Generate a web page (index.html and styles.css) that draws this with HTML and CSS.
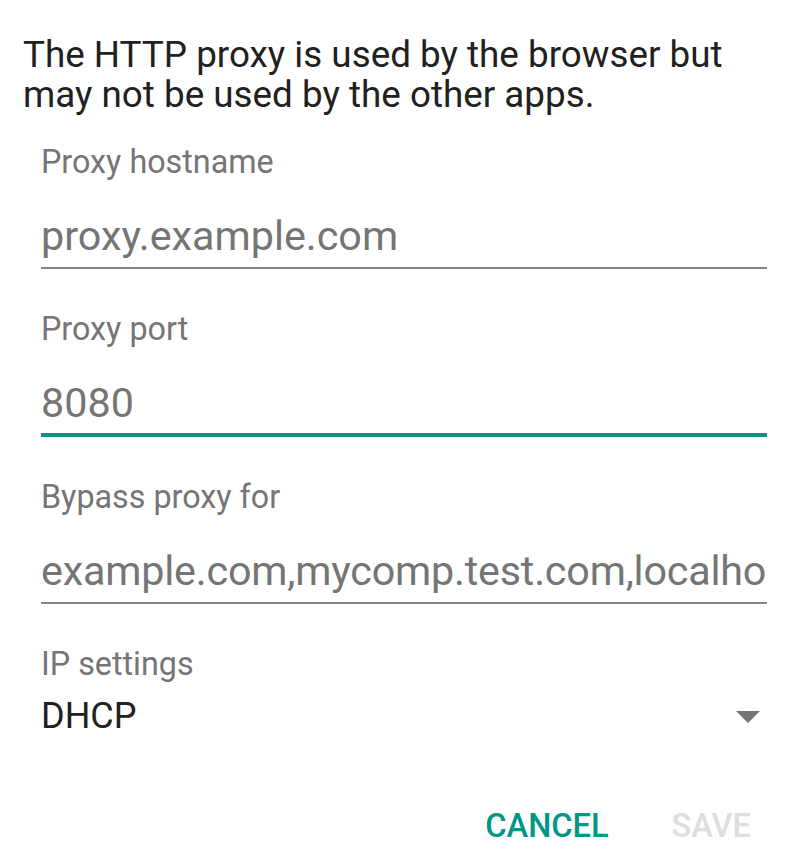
FILE: index.html
```html
<!DOCTYPE html>
<html lang="en">
<head>
    <meta charset="UTF-8">
    <meta name="viewport" content="width=device-width, initial-scale=1.0">
    <title>Proxy settings</title>
    <link rel="stylesheet" href="styles.css">
</head>
<body>

    <div class="dialog">
        <p class="message">The HTTP proxy is used by the browser but may not be used by the other apps.</p>

        <!-- Proxy fields -->
        <div class="field">
            <div class="field-label">Proxy hostname</div>
            <div class="field-input">proxy.example.com</div>
        </div>

        <div class="field">
            <div class="field-label">Proxy port</div>
            <div class="field-input focused">8080</div>
        </div>

        <div class="field">
            <div class="field-label">Bypass proxy for</div>
            <div class="field-input long">example.com,mycomp.test.com,localho</div>
        </div>

        <!-- IP settings spinner -->
        <div class="field spinner-field">
            <div class="field-label">IP settings</div>
            <div class="spinner">
                <span class="spinner-value">DHCP</span>
                <span class="spinner-arrow"></span>
            </div>
        </div>

        <div class="actions">
            <button class="btn btn-primary">Cancel</button>
            <button class="btn btn-disabled" disabled>Save</button>
        </div>
    </div>

</body>
</html>
```

FILE: styles.css
```css
/* Basic Reset */
* {
    margin: 0;
    padding: 0;
    box-sizing: border-box;
}

body {
    font-family: Roboto, 'Noto Sans', sans-serif;
    background: #fff;
    width: 800px;
    height: 865px;
    overflow: hidden;
}

.dialog {
    padding-top: 35px;
}

/* Message */
.message {
    font-size: 36.8px;
    line-height: 40px;
    color: #212121;
    padding: 0 30px 0 23px;
}

/* Text fields */
.field {
    padding: 0 33px 0 41px;
    margin-top: 40px;
}

.field:first-of-type {
    margin-top: 27px;
}

.field-label {
    font-size: 32.3px;
    line-height: 40px;
    color: #757575;
}

.field-input {
    font-size: 41.3px;
    line-height: 48px;
    color: #757575;
    margin-top: 30px;
    padding-bottom: 7px;
    border-bottom: 2px solid #858585;
    white-space: nowrap;
}

.field-input.long {
    letter-spacing: -0.2px;
}

.field-input.focused {
    padding-bottom: 6px;
    border-bottom: 4px solid #009688;
}

/* Spinner */
.spinner-field {
    padding-right: 40px;
}

.spinner {
    display: flex;
    justify-content: space-between;
    align-items: center;
    margin-top: 10px;
}

.spinner-value {
    font-size: 36px;
    line-height: 44px;
    color: #212121;
}

.spinner-arrow {
    width: 0;
    height: 0;
    border-left: 12px solid transparent;
    border-right: 12px solid transparent;
    border-top: 12px solid #757575;
    margin-top: 2px;
}

/* Buttons */
.actions {
    display: flex;
    justify-content: flex-end;
    gap: 63px;
    padding-right: 49px;
    margin-top: 68px;
}

.btn {
    font-family: Roboto, sans-serif;
    font-weight: 500;
    font-size: 32.6px;
    line-height: 40px;
    text-transform: uppercase;
    background: none;
    border: none;
}

.btn-primary {
    color: #009688;
}

.btn-disabled {
    color: #dedede;
}
```
